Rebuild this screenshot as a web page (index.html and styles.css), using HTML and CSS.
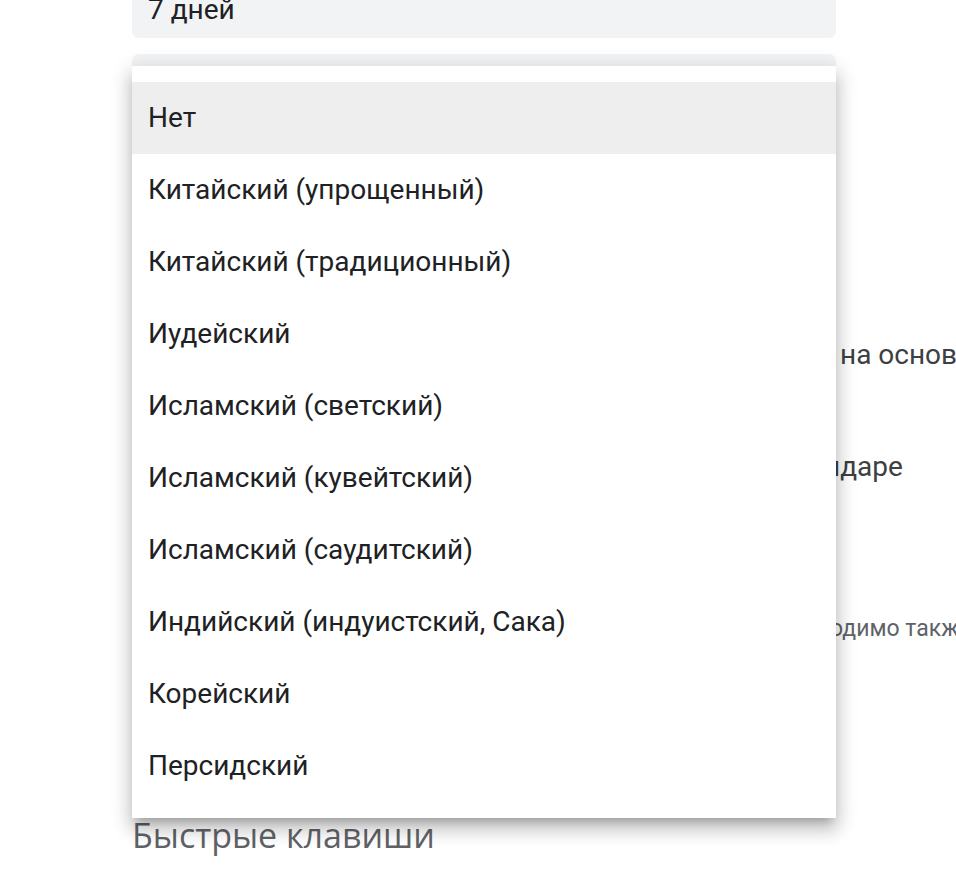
FILE: index.html
```html
<!DOCTYPE html>
<html lang="ru">
<head>
<meta charset="utf-8">
<link rel="stylesheet" href="styles.css">
</head>
<body>
<main class="page">
  <div class="select select-first">7 дней</div>
  <div class="select select-second"></div>

  <div class="row row-a">
    <span class="row-lead"></span>
    <span class="row-tail">на основ</span>
  </div>
  <div class="row row-b">
    <span class="row-lead"></span>
    <span class="row-tail">ндаре</span>
  </div>
  <div class="row row-c hint">
    <span class="row-lead"></span>
    <span class="row-tail">одимо такж</span>
  </div>

  <h2 class="section-title">Быстрые клавиши</h2>

  <ul class="menu" role="listbox">
    <li class="menu-item is-active">Нет</li>
    <li class="menu-item">Китайский (упрощенный)</li>
    <li class="menu-item">Китайский (традиционный)</li>
    <li class="menu-item">Иудейский</li>
    <li class="menu-item">Исламский (светский)</li>
    <li class="menu-item">Исламский (кувейтский)</li>
    <li class="menu-item">Исламский (саудитский)</li>
    <li class="menu-item">Индийский (индуистский, Сака)</li>
    <li class="menu-item">Корейский</li>
    <li class="menu-item">Персидский</li>
  </ul>
</main>
</body>
</html>
```

FILE: styles.css
```css
html, body {
  margin: 0;
  padding: 0;
  background: #ffffff;
  overflow: hidden;
  width: 956px;
  height: 888px;
}

.page {
  position: relative;
  display: flow-root;
  padding-left: 132px;
  font-family: Roboto, "Noto Sans", Arial, sans-serif;
  color: #202124;
}

.select {
  width: 704px;
  height: 72px;
  box-sizing: border-box;
  padding: 0 16px;
  background: #f1f3f4;
  border-radius: 7px;
  font-size: 28px;
  line-height: 72px;
}

.select-first {
  margin-top: -34px;
  line-height: 28px;
  padding-top: 30px;
}

.select-second {
  margin-top: 16px;
}

.row {
  display: grid;
  grid-template-columns: 708px auto;
  white-space: nowrap;
  font-size: 28px;
  line-height: 32px;
  color: #3c4043;
}

.row-a { margin-top: 213px; }
.row-b { margin-top: 80px; grid-template-columns: 692px auto; }
.row-c { margin-top: 130px; }

.hint {
  font-size: 23px;
  color: #5f6368;
  grid-template-columns: 698px auto;
}

.section-title {
  margin: 170px 0 0;
  font-family: "Open Sans", Roboto, sans-serif;
  font-weight: 400;
  font-size: 34px;
  line-height: 40px;
  color: #5f6368;
}

.menu {
  position: absolute;
  top: 66px;
  left: 132px;
  width: 704px;
  margin: 0;
  padding: 16px 0;
  list-style: none;
  background: #ffffff;
  box-shadow: 0 8px 8px -5px rgba(0,0,0,.2),
              0 12px 15px 2px rgba(0,0,0,.14),
              0 5px 21px 3px rgba(0,0,0,.12);
}

.menu-item {
  height: 72px;
  padding: 0 16px;
  font-size: 28px;
  line-height: 72px;
  color: #202124;
  white-space: nowrap;
}

.menu-item.is-active {
  background: #eeeeee;
}
```
